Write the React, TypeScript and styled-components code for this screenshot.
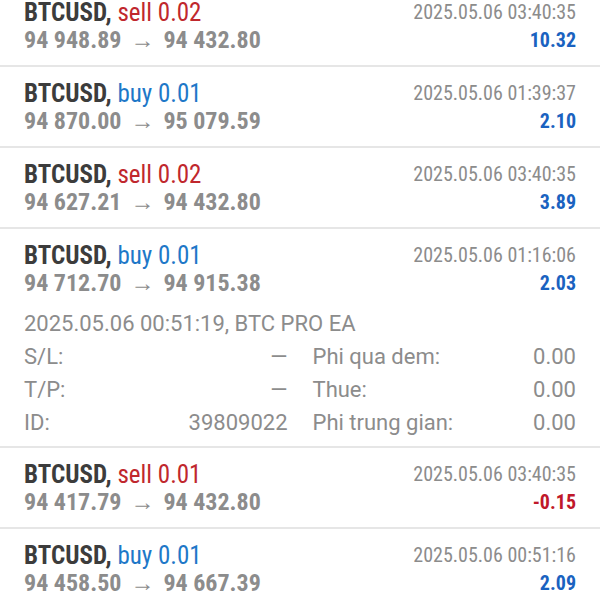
import styled, {createGlobalStyle} from 'styled-components'

const GlobalStyle = createGlobalStyle`
	html, body {
		margin: 0;
		padding: 0;
		background: #ffffff;
		overflow: hidden;
	}
	body {
		font-family: Roboto, "Noto Sans", sans-serif;
	}
`

const List = styled.div`
	margin-top: -14px;
	display: flex;
	flex-direction: column;
`

const Row = styled.div`
	padding: 12px 24px 11px;
	border-bottom: 2px solid #e6e6e6;
`

const Head = styled.div`
	display: grid;
	grid-template-columns: 1fr auto;
	grid-auto-rows: 28px;
	align-items: center;
`

const Title = styled.div`
	font-family: "Roboto Condensed", Roboto, sans-serif;
	font-size: 25px;
	font-weight: 700;
	color: #3c3c3c;
	white-space: nowrap;
`

const Side = styled.span<{$sell: boolean}>`
	font-weight: 400;
	color: ${p => (p.$sell ? '#c0272d' : '#1e78c8')};
`

const Prices = styled.div`
	font-family: "Roboto Condensed", Roboto, sans-serif;
	font-size: 24px;
	font-weight: 700;
	color: #8c8c8c;
	white-space: nowrap;
`

const Arrow = styled.span`
	font-weight: 400;
	margin: 0 9px;
`

const Time = styled.div`
	font-family: "Roboto Condensed", Roboto, sans-serif;
	font-size: 20px;
	color: #8c8c8c;
	text-align: right;
`

const Profit = styled.div<{$neg: boolean}>`
	font-family: "Roboto Condensed", Roboto, sans-serif;
	font-size: 20px;
	font-weight: 700;
	text-align: right;
	color: ${p => (p.$neg ? '#c0182a' : '#1a62c0')};
`

const Details = styled.div`
	margin-top: 10px;
	margin-bottom: -4px;
	font-size: 22px;
	color: #8c8c8c;
	display: grid;
	grid-template-columns: 1fr 1fr;
	grid-auto-rows: 33px;
	column-gap: 25px;
	align-items: center;
`

const Opened = styled.div`
	grid-column: 1 / -1;
	white-space: nowrap;
`

const Cell = styled.div`
	display: flex;
	justify-content: space-between;
	white-space: nowrap;
`

interface IDeal {
	side: 'buy' | 'sell';
	volume: string;
	open: string;
	close: string;
	time: string;
	profit: string;
}

const deals: IDeal[] = [
	{side: 'sell', volume: '0.02', open: '94 948.89', close: '94 432.80', time: '2025.05.06 03:40:35', profit: '10.32'},
	{side: 'buy', volume: '0.01', open: '94 870.00', close: '95 079.59', time: '2025.05.06 01:39:37', profit: '2.10'},
	{side: 'sell', volume: '0.02', open: '94 627.21', close: '94 432.80', time: '2025.05.06 03:40:35', profit: '3.89'},
	{side: 'buy', volume: '0.01', open: '94 712.70', close: '94 915.38', time: '2025.05.06 01:16:06', profit: '2.03'},
	{side: 'sell', volume: '0.01', open: '94 417.79', close: '94 432.80', time: '2025.05.06 03:40:35', profit: '-0.15'},
	{side: 'buy', volume: '0.01', open: '94 458.50', close: '94 667.39', time: '2025.05.06 00:51:16', profit: '2.09'},
]

const DealRow = ({deal, expanded}: {deal: IDeal; expanded: boolean}): JSX.Element => (
	<Row>
		<Head>
			<Title>
				BTCUSD, <Side $sell={deal.side === 'sell'}>{deal.side} {deal.volume}</Side>
			</Title>
			<Time>{deal.time}</Time>
			<Prices>
				{deal.open}<Arrow>→</Arrow>{deal.close}
			</Prices>
			<Profit $neg={deal.profit.startsWith('-')}>{deal.profit}</Profit>
		</Head>
		{expanded && (
			<Details>
				<Opened>2025.05.06 00:51:19, BTC PRO EA</Opened>
				<Cell><span>S/L:</span><span>—</span></Cell>
				<Cell><span>Phi qua dem:</span><span>0.00</span></Cell>
				<Cell><span>T/P:</span><span>—</span></Cell>
				<Cell><span>Thue:</span><span>0.00</span></Cell>
				<Cell><span>ID:</span><span>39809022</span></Cell>
				<Cell><span>Phi trung gian:</span><span>0.00</span></Cell>
			</Details>
		)}
	</Row>
)

export default function App(): JSX.Element {
	return (
		<>
			<GlobalStyle />
			<List>
				{deals.map((deal, i) => <DealRow deal={deal} expanded={i === 3} key={i} />)}
			</List>
		</>
	)
}
